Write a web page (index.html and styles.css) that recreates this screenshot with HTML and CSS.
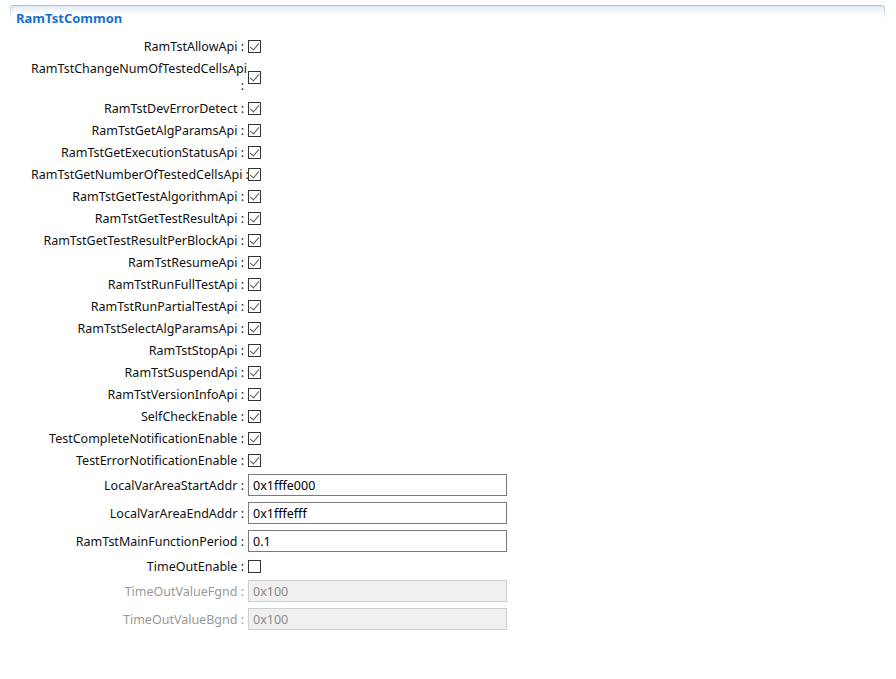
FILE: index.html
```html
<!DOCTYPE html>
<html lang="en">
	<head>
		<meta charset="UTF-8" />
		<title>RamTstCommon</title>
		<link rel="stylesheet" href="styles.css">
	</head>
	<body>
		<div class="panel">
			<div class="panel-title">RamTstCommon</div>
			<div class="form">
				<div class="row"><span class="label">RamTstAllowApi :</span><span class="check on"></span></div>
				<div class="row row-tall"><span class="label">RamTstChangeNumOfTestedCellsApi<br />:</span><span class="check on"></span></div>
				<div class="row"><span class="label">RamTstDevErrorDetect :</span><span class="check on"></span></div>
				<div class="row"><span class="label">RamTstGetAlgParamsApi :</span><span class="check on"></span></div>
				<div class="row"><span class="label">RamTstGetExecutionStatusApi :</span><span class="check on"></span></div>
				<div class="row"><span class="label">RamTstGetNumberOfTestedCellsApi :</span><span class="check on"></span></div>
				<div class="row"><span class="label">RamTstGetTestAlgorithmApi :</span><span class="check on"></span></div>
				<div class="row"><span class="label">RamTstGetTestResultApi :</span><span class="check on"></span></div>
				<div class="row"><span class="label">RamTstGetTestResultPerBlockApi :</span><span class="check on"></span></div>
				<div class="row"><span class="label">RamTstResumeApi :</span><span class="check on"></span></div>
				<div class="row"><span class="label">RamTstRunFullTestApi :</span><span class="check on"></span></div>
				<div class="row"><span class="label">RamTstRunPartialTestApi :</span><span class="check on"></span></div>
				<div class="row"><span class="label">RamTstSelectAlgParamsApi :</span><span class="check on"></span></div>
				<div class="row"><span class="label">RamTstStopApi :</span><span class="check on"></span></div>
				<div class="row"><span class="label">RamTstSuspendApi :</span><span class="check on"></span></div>
				<div class="row"><span class="label">RamTstVersionInfoApi :</span><span class="check on"></span></div>
				<div class="row"><span class="label">SelfCheckEnable :</span><span class="check on"></span></div>
				<div class="row"><span class="label">TestCompleteNotificationEnable :</span><span class="check on"></span></div>
				<div class="row"><span class="label">TestErrorNotificationEnable :</span><span class="check on"></span></div>
				<div class="row row-field"><span class="label">LocalVarAreaStartAddr :</span><input class="field" type="text" value="0x1fffe000" /></div>
				<div class="row row-field"><span class="label">LocalVarAreaEndAddr :</span><input class="field" type="text" value="0x1fffefff" /></div>
				<div class="row row-field"><span class="label">RamTstMainFunctionPeriod :</span><input class="field" type="text" value="0.1" /></div>
				<div class="row"><span class="label">TimeOutEnable :</span><span class="check"></span></div>
				<div class="row row-field disabled"><span class="label">TimeOutValueFgnd :</span><input class="field" type="text" value="0x100" disabled /></div>
				<div class="row row-field disabled"><span class="label">TimeOutValueBgnd :</span><input class="field" type="text" value="0x100" disabled /></div>
			</div>
		</div>
	</body>
</html>
```

FILE: styles.css
```css
body {
	margin: 0;
	background: #fff;
	font-family: 'Noto Sans', 'Open Sans', sans-serif;
	font-size: 12.5px;
	color: #111;
}

.panel {
	margin: 5px 11px 0 10px;
	border: 1px solid transparent;
	border-bottom: none;
	border-radius: 4px 4px 0 0;
	background: linear-gradient(#e4ebf6, #fff 9px) padding-box,
		linear-gradient(#a9bddb, #fff 14px) border-box;
}

.panel-title {
	height: 29px;
	padding-left: 5px;
	line-height: 24px;
	font-size: 13px;
	font-weight: bold;
	color: #1670d0;
}

.row {
	display: flex;
	align-items: center;
	height: 22px;
}
.row-tall {
	height: 40px;
	line-height: 17px;
}
.row-field {
	height: 28px;
}

.label {
	flex: none;
	width: 213px;
	margin-left: 20px;
	padding-right: 4px;
	text-align: right;
	white-space: nowrap;
}
.disabled .label {
	color: #999;
}

.check {
	width: 11px;
	height: 11px;
	border: 1px solid #333;
	background: #fff;
	position: relative;
}
.check.on::after {
	content: '';
	position: absolute;
	left: 3px;
	top: 0px;
	width: 4px;
	height: 8px;
	border-right: 1.2px solid #555;
	border-bottom: 1.2px solid #555;
	transform: rotate(40deg);
}

.field {
	box-sizing: border-box;
	width: 259px;
	height: 22px;
	margin: 0;
	padding: 0 4px;
	border: 1px solid #7a7a7a;
	font-family: inherit;
	font-size: 12.5px;
	color: #000;
	background: #fff;
	outline: none;
}
.field:disabled {
	border-color: #cfcfcf;
	background: #f0f0f0;
	color: #8a8a8a;
}
```
